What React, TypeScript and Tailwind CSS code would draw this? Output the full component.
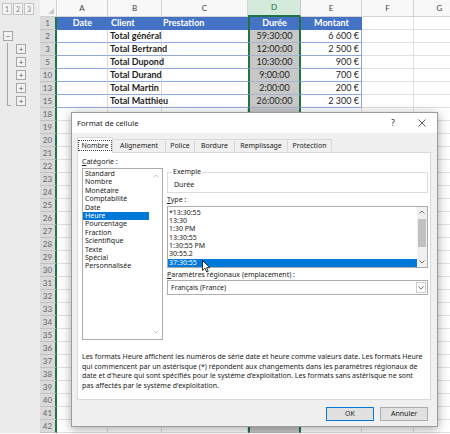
import React from 'react'

const COLS = ['w-[51px]', 'w-[54px]', 'w-[86px]', 'w-[53px]', 'w-[61px]', 'w-[52px]', 'w-[52px]']
const LETTERS = ['A', 'B', 'C', 'D', 'E', 'F', 'G']

type Row = { n: string; b?: string; d?: string; e?: string; outline?: 'minus' | 'plus' | 'last' }

const tableRows: Row[] = [
  { n: '2', b: 'Total général', d: '59:30:00', e: '6 600 €', outline: 'minus' },
  { n: '3', b: 'Total Bertrand', d: '12:00:00', e: '2 500 €', outline: 'plus' },
  { n: '5', b: 'Total Dupond', d: '10:30:00', e: '900 €', outline: 'plus' },
  { n: '10', b: 'Total Durand', d: '9:00:00', e: '700 €', outline: 'plus' },
  { n: '13', b: 'Total Martin', d: '2:00:00', e: '200 €', outline: 'plus' },
  { n: '15', b: 'Total Matthieu', d: '26:00:00', e: '2 300 €', outline: 'last' },
]

const emptyRows = Array.from({ length: 25 }, (_, i) => String(18 + i))

const categories = [
  'Standard', 'Nombre', 'Monétaire', 'Comptabilité', 'Date', 'Heure',
  'Pourcentage', 'Fraction', 'Scientifique', 'Texte', 'Spécial', 'Personnalisée',
]

const types = ['*13:30:55', '13:30', '1:30 PM', '13:30:55', '1:30:55 PM', '30:55.2', '37:30:55']

const tabs = [
  { label: 'Nombre', w: 'w-[36px]' },
  { label: 'Alignement', w: 'w-[54px]' },
  { label: 'Police', w: 'w-[30px]' },
  { label: 'Bordure', w: 'w-[41px]' },
  { label: 'Remplissage', w: 'w-[54px]' },
  { label: 'Protection', w: 'w-[45px]' },
]

function Chevron({ up }: { up?: boolean }) {
  return (
    <svg width="6" height="4" viewBox="0 0 6 4">
      <polyline
        points={up ? '0.5,3.5 3,1 5.5,3.5' : '0.5,0.5 3,3 5.5,0.5'}
        fill="none"
        stroke="currentColor"
        strokeWidth="0.9"
      />
    </svg>
  )
}

function OutlineBox({ sign }: { sign: string }) {
  return (
    <div className="w-[10px] h-[10px] border border-[#a6a6a6] bg-[#f2f2f2] flex items-center justify-center text-[8px] leading-none text-[#555]">
      {sign}
    </div>
  )
}

function Gutter({ outline }: { outline?: Row['outline'] }) {
  return (
    <div className="w-[40px] h-full shrink-0 bg-[#ebebeb] flex">
      <div className="w-[16px] h-full flex">
        {outline === 'minus' && (
          <div className="ml-[3px] mt-[1px]">
            <OutlineBox sign="−" />
          </div>
        )}
        {outline === 'plus' && <div className="ml-[7px] w-px h-full bg-[#a6a6a6]" />}
        {outline === 'last' && <div className="ml-[7px] w-[4px] h-[11px] border-l border-b border-[#a6a6a6]" />}
      </div>
      {(outline === 'plus' || outline === 'last') && (
        <div className="mt-[1px]">
          <OutlineBox sign="+" />
        </div>
      )}
    </div>
  )
}

function RowHead({ n }: { n: string }) {
  return (
    <div className="w-[17px] h-full shrink-0 bg-[#d9d9d9] text-[#666] text-[8px] leading-[12px] text-center border-b border-b-[#c2c2c2] border-r-2 border-r-[#217346]">
      {n}
    </div>
  )
}

function HeaderRow() {
  return (
    <div className="flex h-[17px]">
      <div className="w-[40px] shrink-0 bg-[#ebebeb] flex items-start pt-[3px] pl-[2px] gap-[1px]">
        {['1', '2', '3'].map((l) => (
          <div key={l} className="w-[10px] h-[12px] border border-[#c4c4c4] bg-[#f4f4f4] text-[7px] leading-[10px] text-center text-[#888]">
            {l}
          </div>
        ))}
      </div>
      <div className="w-[17px] shrink-0 bg-[#f7f7f7] border-r border-b border-[#d0d0d0] flex items-end justify-end p-[2px]">
        <svg width="6" height="6" viewBox="0 0 6 6">
          <polygon points="6,0 6,6 0,6" fill="#c8c8c8" />
        </svg>
      </div>
      {LETTERS.map((l, i) =>
        l === 'D' ? (
          <div key={l} className={`${COLS[i]} shrink-0 bg-[#d3eadc] text-[#1e6b41] text-[8px] leading-[15px] text-center border-b-2 border-b-[#217346] border-r border-r-[#c6c6c6]`}>
            {l}
          </div>
        ) : (
          <div key={l} className={`${COLS[i]} shrink-0 bg-[#f8f8f8] text-[#444] text-[8px] leading-[16px] text-center border-b border-r border-[#d4d4d4]`}>
            {l}
          </div>
        ),
      )}
    </div>
  )
}

function TitleRow() {
  return (
    <div className="flex h-[13px]">
      <Gutter />
      <RowHead n="1" />
      <div className={`${COLS[0]} shrink-0 bg-[#4472c4] text-white font-bold text-center`}>Date</div>
      <div className={`${COLS[1]} shrink-0 bg-[#4472c4] text-white font-bold pl-[3px]`}>Client</div>
      <div className={`${COLS[2]} shrink-0 bg-[#4472c4] text-white font-bold pl-[1px]`}>Prestation</div>
      <div className={`${COLS[3]} shrink-0 bg-[#4472c4] text-white font-bold text-center border-x-2 border-[#217346]`}>Durée</div>
      <div className={`${COLS[4]} shrink-0 bg-[#4472c4] text-white font-bold text-center`}>Montant</div>
      <div className={`${COLS[5]} shrink-0 border-b border-r border-[#e1e1e1]`} />
      <div className={`${COLS[6]} shrink-0 border-b border-r border-[#e1e1e1]`} />
    </div>
  )
}

function TableRow({ row }: { row: Row }) {
  return (
    <div className="flex h-[13px]">
      <Gutter outline={row.outline} />
      <RowHead n={row.n} />
      <div className={`${COLS[0]} shrink-0 border-b border-b-[#8ea9db] border-r border-r-[#dadada]`} />
      <div className={`${COLS[1]} shrink-0 font-bold pl-[2px] whitespace-nowrap border-b border-b-[#8ea9db] border-r border-r-[#dadada]`}>
        {row.b}
      </div>
      <div className={`${COLS[2]} shrink-0 border-b border-b-[#8ea9db]`} />
      <div className={`${COLS[3]} shrink-0 bg-[#c8c8c8] text-center border-x-2 border-x-[#217346] border-b border-b-[#a3b3d0]`}>
        {row.d}
      </div>
      <div className={`${COLS[4]} shrink-0 text-right pr-[2px] border-b border-b-[#8ea9db] border-r border-r-[#8ea9db]`}>
        {row.e}
      </div>
      <div className={`${COLS[5]} shrink-0 border-b border-r border-[#e1e1e1]`} />
      <div className={`${COLS[6]} shrink-0 border-b border-r border-[#e1e1e1]`} />
    </div>
  )
}

function EmptyRow({ n }: { n: string }) {
  return (
    <div className="flex h-[13px]">
      <Gutter />
      <RowHead n={n} />
      {LETTERS.map((l, i) =>
        l === 'D' ? (
          <div key={l} className={`${COLS[i]} shrink-0 bg-[#c8c8c8] border-x-2 border-x-[#217346] border-b border-b-[#b8b8b8]`} />
        ) : (
          <div key={l} className={`${COLS[i]} shrink-0 border-b border-r border-[#e1e1e1]`} />
        ),
      )}
    </div>
  )
}

function Dialog() {
  return (
    <div className="absolute left-[71px] top-[112px] w-[367px] h-[315px] border border-[#9c9c9c] bg-[#f0f0f0] shadow-[0_2px_10px_rgba(0,0,0,0.35)] flex flex-col font-['Noto_Sans',sans-serif] text-[7px] text-[#1a1a1a]">
      {/* title bar */}
      <div className="h-[20px] bg-white flex items-center pl-[5px]">
        <span className="text-[7.6px]">Format de cellule</span>
        <span className="ml-auto w-[10px] text-center text-[8px] mr-[9px]">?</span>
        <div className="w-[30px] flex justify-center">
          <svg width="8" height="8" viewBox="0 0 8 8">
            <path d="M0.5 0.5 L7.5 7.5 M7.5 0.5 L0.5 7.5" stroke="#333" strokeWidth="0.8" />
          </svg>
        </div>
      </div>

      <div className="flex-1 flex flex-col px-[5px] pt-[4px]">
        {/* tabs */}
        <div className="flex items-end h-[15px]">
          {tabs.map((t, i) =>
            i === 0 ? (
              <div key={t.label} className={`${t.w} h-[16px] -mb-px relative z-10 bg-white border border-b-0 border-[#d9d9d9] flex items-center justify-center`}>
                <span className="border border-dotted border-[#444] px-[2px] leading-[9px]">{t.label}</span>
              </div>
            ) : (
              <div key={t.label} className={`${t.w} h-[13px] -ml-px bg-[#f0f0f0] border border-b-0 border-[#d9d9d9] flex items-center justify-center`}>
                {t.label}
              </div>
            ),
          )}
        </div>

        {/* panel */}
        <div className="w-[354px] h-[248px] bg-white border border-[#d9d9d9] pl-[4px] pt-[5px] flex flex-col">
          <div className="flex">
            <div className="w-[81px]">
              <div className="leading-[8px]">
                <span className="underline">C</span>atégorie :
              </div>
              <div className="mt-[2px] h-[172px] border border-[#ababab] flex">
                <div className="flex-1 pt-[1px]">
                  {categories.map((c) => (
                    <div
                      key={c}
                      className={
                        c === 'Heure'
                          ? 'h-[8.4px] leading-[8.4px] pl-[2px] bg-[#0078d7] text-white'
                          : 'h-[8.4px] leading-[8.4px] pl-[2px]'
                      }
                    >
                      {c}
                    </div>
                  ))}
                </div>
                <div className="w-[13px] flex flex-col items-center justify-between py-[5px] text-[#c4c4c4]">
                  <Chevron up />
                  <Chevron />
                </div>
              </div>
            </div>

            <div className="w-[261px] ml-[4px] mt-[10px]">
              <fieldset className="border border-[#dcdcdc] px-[6px] pt-[5px] pb-[3px]">
                <legend className="-ml-[2px] px-[1px] leading-[8px]">Exemple</legend>
                <div className="leading-[8px]">Durée</div>
              </fieldset>

              <div className="mt-[3px] leading-[8px]">
                <span className="underline">T</span>ype :
              </div>
              <div className="mt-[2px] h-[62px] border border-[#ababab] flex">
                <div className="flex-1 pt-[1.5px]">
                  {types.map((t, i) => (
                    <div
                      key={i}
                      className={
                        i === types.length - 1
                          ? 'h-[8.4px] leading-[8.4px] pl-[1px] bg-[#0078d7] text-white'
                          : 'h-[8.4px] leading-[8.4px] pl-[1px]'
                      }
                    >
                      {t}
                    </div>
                  ))}
                </div>
                <div className="w-[10px] bg-[#f0f0f0] flex flex-col text-[#606060]">
                  <div className="h-[10px] flex items-center justify-center">
                    <Chevron up />
                  </div>
                  <div className="mt-[2px] mx-[1px] h-[28px] bg-[#c1c1c1]" />
                  <div className="flex-1" />
                  <div className="h-[10px] flex items-center justify-center">
                    <Chevron />
                  </div>
                </div>
              </div>

              <div className="mt-[3px] leading-[8px]">
                <span className="underline">P</span>aramètres régionaux (emplacement) :
              </div>
              <div className="mt-[1px] h-[15px] border border-[#adadad] bg-white flex items-center">
                <span className="flex-1 pl-[3px]">Français (France)</span>
                <div className="w-[10px] h-[11px] mr-[1px] border border-[#cfcfcf] flex items-center justify-center text-[#606060]">
                  <Chevron />
                </div>
              </div>
            </div>
          </div>

          <p className="mt-[12px] leading-[9.5px] whitespace-nowrap">
            Les formats Heure affichent les numéros de série date et heure comme valeurs date. Les formats Heure
            <br />
            qui commencent par un astérisque (*) répondent aux changements dans les paramètres régionaux de
            <br />
            date et d'heure qui sont spécifiés pour le système d'exploitation. Les formats sans astérisque ne sont
            <br />
            pas affectés par le système d'exploitation.
          </p>
        </div>

        {/* buttons */}
        <div className="mt-[7px] flex justify-end gap-[6px] pr-[4px]">
          <div className="w-[48px] h-[14px] bg-[#e1e1e1] border border-[#0078d7] flex items-center justify-center">OK</div>
          <div className="w-[48px] h-[14px] bg-[#e1e1e1] border border-[#adadad] flex items-center justify-center">Annuler</div>
        </div>
      </div>

      {/* mouse pointer */}
      <svg className="absolute left-[130px] top-[147px]" width="9" height="13" viewBox="0 0 9 13">
        <polygon
          points="0.5,0.5 0.5,10.5 3,8.2 4.7,12 6.2,11.3 4.6,7.7 7.8,7.7"
          fill="#fff"
          stroke="#000"
          strokeWidth="0.8"
          strokeLinejoin="round"
        />
      </svg>
    </div>
  )
}

export default function App() {
  return (
    <div className="relative w-[450px] h-[434px] overflow-hidden bg-white font-['Lato',sans-serif] text-[9px] leading-[12px] text-[#1f1f1f]">
      <HeaderRow />
      <TitleRow />
      {tableRows.map((r) => (
        <TableRow key={r.n} row={r} />
      ))}
      {emptyRows.map((n) => (
        <EmptyRow key={n} n={n} />
      ))}
      <Dialog />
    </div>
  )
}
